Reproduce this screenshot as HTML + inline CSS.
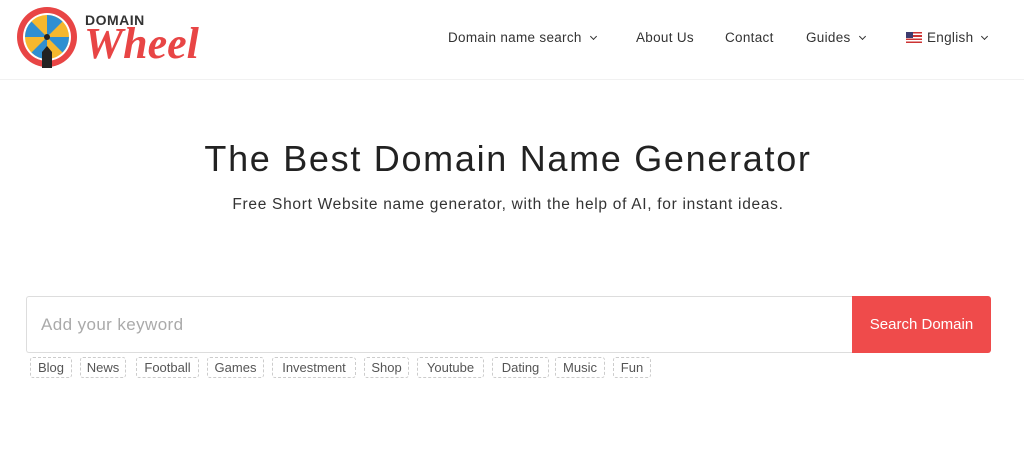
<!DOCTYPE html>
<html><head><meta charset="utf-8"><style>
*{margin:0;padding:0;box-sizing:border-box}
body{width:1024px;height:450px;background:#fff;font-family:"Liberation Sans",sans-serif;color:#222;position:relative;overflow:hidden}
.hdr{position:absolute;left:0;top:0;width:1024px;height:80px;border-bottom:1px solid #f1f1f1}
.nav{position:absolute;top:30px;font-size:13.5px;color:#333;letter-spacing:0.3px}
h1{position:absolute;top:138px;left:0;width:1016px;text-align:center;font-weight:400;font-size:36px;color:#222;letter-spacing:1.7px}
.sub{position:absolute;top:196px;left:0;width:1016px;text-align:center;font-size:15.5px;color:#333;letter-spacing:0.7px}
.box{position:absolute;left:26px;top:296px;width:827px;height:57px;border:1px solid #ddd;border-right:none;border-radius:3px 0 0 3px}
.box span{position:absolute;left:14px;top:18px;font-size:17px;color:#aaa;letter-spacing:0.4px}
.btn{position:absolute;left:852px;top:296px;width:139px;height:57px;background:#ef4b4b;color:#fff;font-size:15px;text-align:center;line-height:57px;border-radius:0 3px 3px 0}
.tag{position:absolute;top:357px;height:21px;border:1px dashed #ccc;border-radius:3px;font-size:13px;color:#555;line-height:19px;text-align:center}
.chev{display:inline-block;width:5px;height:5px;border-right:1.5px solid #333;border-bottom:1.5px solid #333;transform:rotate(45deg);margin-left:9px;position:relative;top:-3px}
</style></head><body>
<div class="hdr">
<svg style="position:absolute;left:15px;top:6px" width="66" height="66" viewBox="0 0 66 66">
<circle cx="32" cy="31" r="30" fill="#e84545"/>
<circle cx="32" cy="31" r="24" fill="#fff"/>
<circle cx="32" cy="31" r="22" fill="#f5b82e"/>
<path d="M32 31 L32 9 A22 22 0 0 1 47.5 15.5Z M32 31 L54 31 A22 22 0 0 1 47.5 46.5Z M32 31 L32 53 A22 22 0 0 1 16.5 46.5Z M32 31 L10 31 A22 22 0 0 1 16.5 15.5Z" fill="#2f8fd1"/>
<circle cx="32" cy="31" r="3" fill="#222"/>
<path d="M27 46 L32 40 L37 46 L37 62 L27 62Z" fill="#222"/>
</svg>
<div style="position:absolute;left:85px;top:12px;font-size:14px;font-weight:700;color:#333;letter-spacing:0.5px">DOMAIN</div>
<div style="position:absolute;left:84px;top:18px;font-size:44px;font-style:italic;font-family:'Liberation Serif',serif;color:#e84545;font-weight:700">Wheel</div>
<div class="nav" style="left:448px">Domain name search<span class="chev"></span></div>
<div class="nav" style="left:636px">About Us</div>
<div class="nav" style="left:725px">Contact</div>
<div class="nav" style="left:806px">Guides<span class="chev"></span></div>
<div class="nav" style="left:906px"><span style="display:inline-block;width:16px;height:11px;background:repeating-linear-gradient(#c33 0 1.6px,#fff 1.6px 3.2px);position:relative;top:1px;margin-right:5px"><span style="position:absolute;left:0;top:0;width:7px;height:6px;background:#3c3b6e"></span></span>English<span class="chev"></span></div>
</div>
<h1>The Best Domain Name Generator</h1>
<div class="sub">Free Short Website name generator, with the help of AI, for instant ideas.</div>
<div class="box"><span>Add your keyword</span></div>
<div class="btn">Search Domain</div>
<div class="tag" style="left:30px;width:42px">Blog</div>
<div class="tag" style="left:80px;width:46px">News</div>
<div class="tag" style="left:136px;width:63px">Football</div>
<div class="tag" style="left:207px;width:57px">Games</div>
<div class="tag" style="left:272px;width:84px">Investment</div>
<div class="tag" style="left:364px;width:45px">Shop</div>
<div class="tag" style="left:417px;width:67px">Youtube</div>
<div class="tag" style="left:492px;width:57px">Dating</div>
<div class="tag" style="left:555px;width:50px">Music</div>
<div class="tag" style="left:613px;width:38px">Fun</div>
</body></html>
